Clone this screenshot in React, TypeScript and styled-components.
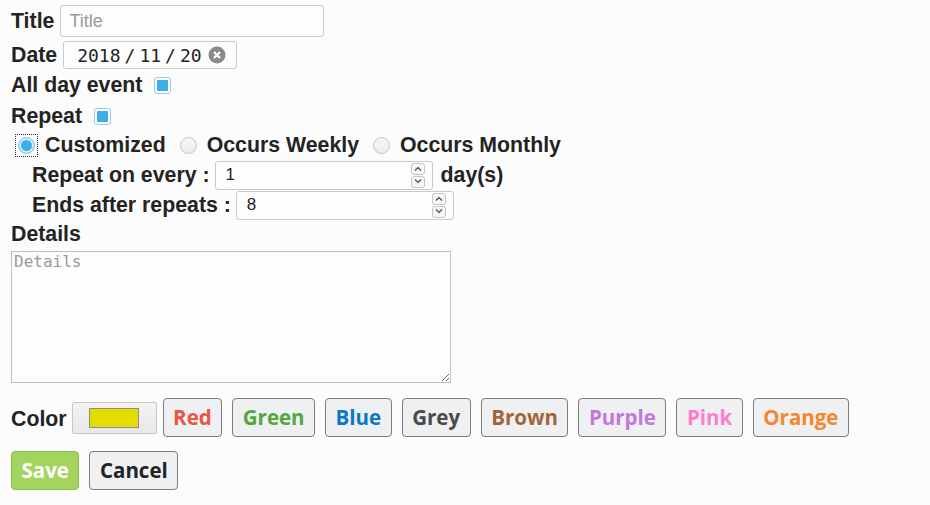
import React from "react";
import styled, { createGlobalStyle } from "styled-components";

const Global = createGlobalStyle`
  html, body { margin: 0; padding: 0; background: #fcfcfc; }
  body { font-family: "Liberation Sans", Arial, sans-serif; color: #232323; }
`;

const Page = styled.div`
  padding: 5px 0 0 11px;
  display: flex;
  flex-direction: column;
`;

const Row = styled.div<{ $h: number; $mt?: number; $indent?: number }>`
  display: flex;
  align-items: center;
  height: ${(p) => p.$h}px;
  margin-top: ${(p) => p.$mt ?? 0}px;
  padding-left: ${(p) => p.$indent ?? 0}px;
`;

const Label = styled.span<{ $mr?: number; $ml?: number; $dy?: number }>`
  font-weight: bold;
  font-size: 21.3px;
  margin-right: ${(p) => p.$mr ?? 0}px;
  margin-left: ${(p) => p.$ml ?? 0}px;
  padding-top: ${(p) => p.$dy ?? 0}px;
  white-space: nowrap;
`;

const TextInput = styled.input`
  box-sizing: border-box;
  width: 264px;
  height: 32px;
  border: 1px solid #c9c9c9;
  border-radius: 3px;
  background: #fdfdfd;
  padding: 0 8px;
  font-family: "Liberation Sans", Arial, sans-serif;
  font-size: 18px;
  outline: none;
  &::placeholder { color: #9a9a9a; }
`;

const DateBox = styled.div`
  box-sizing: border-box;
  width: 174px;
  height: 28px;
  border: 1px solid #c9c9c9;
  border-radius: 3px;
  background: #fdfdfd;
  display: flex;
  align-items: center;
  padding-left: 13px;
  font-family: "DejaVu Sans Mono", monospace;
  font-size: 18px;
  color: #222;
`;

const DatePart = styled.span``;

const DateSep = styled.span`
  margin: 0 4px;
`;

const ClearIcon = styled.svg`
  margin-left: 6px;
`;

const Check = styled.span`
  box-sizing: border-box;
  width: 17px;
  height: 17px;
  border: 1.5px solid #93cdf0;
  border-radius: 3px;
  background: #fff;
  display: inline-flex;
  align-items: center;
  justify-content: center;
  &::after {
    content: "";
    width: 11px;
    height: 11px;
    background: #3daee9;
    border-radius: 1px;
  }
`;

const RadioFocus = styled.span`
  display: inline-flex;
  padding: 2px;
  outline: 1px dotted #333;
  margin-left: 5px;
  margin-right: 8px;
`;

const Radio = styled.span<{ $on?: boolean }>`
  box-sizing: border-box;
  width: 17px;
  height: 17px;
  border-radius: 50%;
  display: inline-block;
  border: 1px solid ${(p) => (p.$on ? "#93cdf0" : "#c4c4c4")};
  background: ${(p) => (p.$on ? "#3daee9" : "linear-gradient(#f7f7f7, #ebebeb)")};
  box-shadow: ${(p) => (p.$on ? "inset 0 0 0 2px #d6eefb" : "none")};
`;

const RadioItem = styled.label`
  display: inline-flex;
  align-items: center;
`;

const NumberBox = styled.div<{ $w: number }>`
  box-sizing: border-box;
  width: ${(p) => p.$w}px;
  height: 29px;
  border: 1px solid #c9c9c9;
  border-radius: 3px;
  background: #fdfdfd;
  display: flex;
  align-items: center;
  padding-left: 10px;
  padding-right: 7px;
  font-family: "Liberation Sans", Arial, sans-serif;
  font-size: 17px;
  color: #222;
`;

const NumberValue = styled.span`
  flex: 1;
`;

const Spin = styled.div`
  display: flex;
  flex-direction: column;
  gap: 1px;
`;

const SpinBtn = styled.span`
  box-sizing: border-box;
  width: 14px;
  height: 12px;
  border: 1px solid #c4c4c4;
  border-radius: 3px;
  background: #f7f7f7;
  display: flex;
  align-items: center;
  justify-content: center;
`;

const TextArea = styled.textarea`
  box-sizing: border-box;
  width: 440px;
  height: 132px;
  margin-top: 3px;
  border: 1px solid #c0c0c0;
  background: #fdfdfd;
  padding: 0 2px;
  font-family: "DejaVu Sans Mono", monospace;
  font-size: 16px;
  line-height: 19px;
  resize: both;
  outline: none;
  &::placeholder { color: #9a9a9a; }
`;

const Swatch = styled.span`
  box-sizing: border-box;
  width: 85px;
  height: 32px;
  border: 1px solid #c6c6c6;
  border-radius: 2px;
  background: linear-gradient(#f2f2f2, #e8e8e8);
  display: inline-flex;
  align-items: center;
  justify-content: center;
  margin-left: 5px;
  margin-right: 6px;
  &::after {
    content: "";
    width: 50px;
    height: 20px;
    box-sizing: border-box;
    background: #e6dd00;
    border: 1px solid #8c8c8c;
  }
`;

const Btn = styled.button<{ $c?: string; $bg?: string; $border?: string }>`
  box-sizing: border-box;
  height: 39px;
  padding: 0 9.5px;
  border: 1px solid ${(p) => p.$border ?? "#7c7c7c"};
  border-radius: 4px;
  background: ${(p) => p.$bg ?? "#eff0f2"};
  color: ${(p) => p.$c ?? "#222"};
  font-family: "Open Sans", "Noto Sans", sans-serif;
  font-weight: bold;
  font-size: 20.5px;
  line-height: 1;
  cursor: pointer;
  margin-right: 10px;
`;

const colors: [string, string][] = [
  ["Red", "#ea5547"],
  ["Green", "#52a83a"],
  ["Blue", "#0a77c9"],
  ["Grey", "#4a4a4a"],
  ["Brown", "#a3643a"],
  ["Purple", "#c476e0"],
  ["Pink", "#ff7dcc"],
  ["Orange", "#f7862e"],
];

const Caret = ({ up }: { up?: boolean }) => (
  <svg width="8" height="5" viewBox="0 0 8 5">
    <path
      d={up ? "M1 4.5 L4 1.5 L7 4.5" : "M1 0.5 L4 3.5 L7 0.5"}
      fill="none"
      stroke="#444"
      strokeWidth="1.1"
    />
  </svg>
);

const Spinner = () => (
  <Spin>
    <SpinBtn><Caret up /></SpinBtn>
    <SpinBtn><Caret /></SpinBtn>
  </Spin>
);

export default function App() {
  return (
    <>
      <Global />
      <Page>
        <Row $h={32}>
          <Label $mr={6}>Title</Label>
          <TextInput placeholder="Title" />
        </Row>
        <Row $h={28} $mt={4}>
          <Label $mr={6}>Date</Label>
          <DateBox>
            <DatePart>2018</DatePart>
            <DateSep>/</DateSep>
            <DatePart>11</DatePart>
            <DateSep>/</DateSep>
            <DatePart>20</DatePart>
            <ClearIcon width="18" height="18" viewBox="0 0 18 18">
              <circle cx="9" cy="9" r="8.5" fill="#8a8a8a" />
              <path d="M6 6 L12 12 M12 6 L6 12" stroke="#fff" strokeWidth="2.2" />
            </ClearIcon>
          </DateBox>
        </Row>
        <Row $h={30} $mt={1}>
          <Label $mr={12}>All day event</Label>
          <Check />
        </Row>
        <Row $h={30} $mt={1}>
          <Label $mr={12}>Repeat</Label>
          <Check />
        </Row>
        <Row $h={30} $mt={-1}>
          <RadioItem>
            <RadioFocus><Radio $on /></RadioFocus>
            <Label $mr={14}>Customized</Label>
          </RadioItem>
          <RadioItem>
            <Radio />
            <Label $ml={10} $mr={14}>Occurs Weekly</Label>
          </RadioItem>
          <RadioItem>
            <Radio />
            <Label $ml={10}>Occurs Monthly</Label>
          </RadioItem>
        </Row>
        <Row $h={30} $indent={21}>
          <Label $mr={5}>Repeat on every :</Label>
          <NumberBox $w={218}>
            <NumberValue>1</NumberValue>
            <Spinner />
          </NumberBox>
          <Label $ml={8}>day(s)</Label>
        </Row>
        <Row $h={30} $indent={21}>
          <Label $mr={5}>Ends after repeats :</Label>
          <NumberBox $w={218}>
            <NumberValue>8</NumberValue>
            <Spinner />
          </NumberBox>
        </Row>
        <Row $h={28}>
          <Label>Details</Label>
        </Row>
        <TextArea placeholder="Details" />
        <Row $h={39} $mt={15}>
          <Label $dy={3}>Color</Label>
          <Swatch />
          {colors.map(([name, c]) => (
            <Btn key={name} $c={c}>{name}</Btn>
          ))}
        </Row>
        <Row $h={39} $mt={14}>
          <Btn $bg="#a3d55e" $c="#fff" $border="#8fbf52">Save</Btn>
          <Btn>Cancel</Btn>
        </Row>
      </Page>
    </>
  );
}
